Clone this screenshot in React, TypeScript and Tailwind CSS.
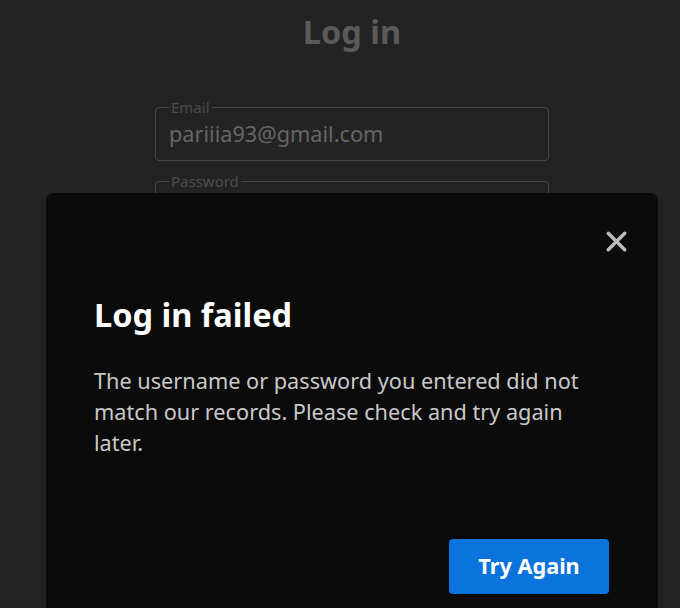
import { X } from "lucide-react";

export default function App() {
  return (
    <div
      className="relative h-[608px] w-[680px] overflow-hidden bg-[#232323]"
      style={{ fontFamily: '"Noto Sans", "Open Sans", sans-serif' }}
    >
      {/* login form behind the dialog */}
      <div className="flex flex-col items-center pl-6 pt-[10px]">
        <h1 className="text-[32.5px] font-bold leading-[44px] text-[#5a5a5a]">Log in</h1>
        <div className="mt-[45px] flex w-[394px] flex-col gap-[12px]">
          <fieldset className="h-[62px] rounded-[4px] border border-[#474747] px-[13px]">
            <legend className="px-[2px] text-[15px] leading-[16px] text-[#4c4c4c]">Email</legend>
            <div className="pt-[6px] text-[21.7px] leading-[26px] text-[#666]">pariiia93@gmail.com</div>
          </fieldset>
          <fieldset className="h-[62px] rounded-[4px] border border-[#474747] px-[13px]">
            <legend className="px-[2px] text-[15px] leading-[16px] text-[#4c4c4c]">Password</legend>
          </fieldset>
        </div>
      </div>

      {/* dialog */}
      <div className="absolute left-[46px] top-[193px] h-[460px] w-[612px] rounded-[8px] bg-[#0b0b0b] pl-[48px] pr-[49px]">
        <div className="flex justify-end pt-[32px]">
          <button className="mr-[-24px] text-[#bdbdbd]">
            <X size={33} strokeWidth={2.5} />
          </button>
        </div>
        <h2 className="mt-[35px] text-[32.5px] font-bold leading-[44px] text-white">Log in failed</h2>
        <p className="mt-[28px] text-[21.7px] leading-[31px] text-[#c9c9c9]">
          The username or password you entered did not match our records. Please check and try again later.
        </p>
        <div className="mt-[81px] flex justify-end">
          <button className="h-[55px] w-[160px] rounded-[4px] bg-[#0a74dc] text-[21.7px] font-bold text-white">
            Try Again
          </button>
        </div>
      </div>
    </div>
  );
}
